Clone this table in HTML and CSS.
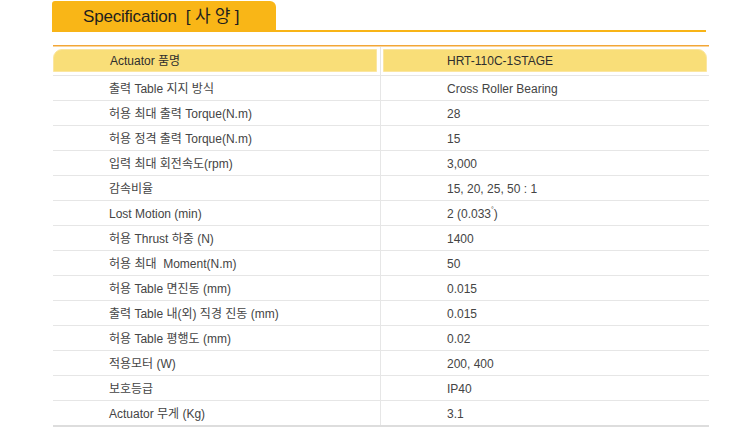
FILE: index.html
```html
<!DOCTYPE html>
<html lang="ko">
<head>
<meta charset="utf-8">
<title>Specification</title>
<link rel="stylesheet" href="styles.css">
</head>
<body>
<div class="top">
  <div class="tab">Specification&nbsp; [ 사 양 ]</div>
</div>
<div class="spec">
  <div class="row head">
    <div class="cell c1"><div class="hcell left">Actuator 품명</div></div>
    <div class="cell c2"><div class="hcell right">HRT-110C-1STAGE</div></div>
  </div>
  <div class="row"><div class="cell c1">출력 Table 지지 방식</div><div class="cell c2">Cross Roller Bearing</div></div>
  <div class="row"><div class="cell c1">허용 최대 출력 Torque(N.m)</div><div class="cell c2">28</div></div>
  <div class="row"><div class="cell c1">허용 정격 출력 Torque(N.m)</div><div class="cell c2">15</div></div>
  <div class="row"><div class="cell c1">입력 최대 회전속도(rpm)</div><div class="cell c2">3,000</div></div>
  <div class="row"><div class="cell c1">감속비율</div><div class="cell c2">15, 20, 25, 50 : 1</div></div>
  <div class="row"><div class="cell c1">Lost Motion (min)</div><div class="cell c2">2 (0.033<sup class="deg">°</sup>)</div></div>
  <div class="row"><div class="cell c1">허용 Thrust 하중 (N)</div><div class="cell c2">1400</div></div>
  <div class="row"><div class="cell c1">허용 최대&nbsp; Moment(N.m)</div><div class="cell c2">50</div></div>
  <div class="row"><div class="cell c1">허용 Table 면진동 (mm)</div><div class="cell c2">0.015</div></div>
  <div class="row"><div class="cell c1">출력 Table 내(외) 직경 진동 (mm)</div><div class="cell c2">0.015</div></div>
  <div class="row"><div class="cell c1">허용 Table 평행도 (mm)</div><div class="cell c2">0.02</div></div>
  <div class="row"><div class="cell c1">적용모터 (W)</div><div class="cell c2">200, 400</div></div>
  <div class="row"><div class="cell c1">보호등급</div><div class="cell c2">IP40</div></div>
  <div class="row last"><div class="cell c1">Actuator 무게 (Kg)</div><div class="cell c2">3.1</div></div>
</div>
</body>
</html>
```
FILE: styles.css
```css
html, body {
  margin: 0;
  padding: 0;
  background: #ffffff;
}
body {
  font-family: "Liberation Sans", "Noto Sans CJK KR", sans-serif;
  color: #444444;
}
.top {
  margin-left: 52px;
  width: 654px;
  padding-top: 1px;
  border-bottom: 2px solid #f8b417;
}
.tab {
  width: 193px;
  height: 29px;
  padding-left: 31px;
  background: #f9b617;
  border-radius: 3px 6px 0 0;
  font-size: 17px;
  line-height: 32px;
  color: #1e1e1e;
  letter-spacing: -0.2px;
}
.spec {
  margin-left: 53px;
  margin-top: 13px;
  width: 656px;
  border-top: 1px solid #f3a637;
  box-shadow: inset 0 1px 0 #f9d49a;
  padding-top: 1px;
}
.row {
  display: grid;
  grid-template-columns: 328px 328px;
  border-bottom: 1px solid #e6e6e6;
  height: 24px;
}
.cell {
  font-size: 12px;
  line-height: 22px;
  padding-top: 2px;
  white-space: nowrap;
}
.c1 {
  border-right: 1px solid #e6e6e6;
  padding-left: 56px;
}
.c2 {
  padding-left: 66px;
}
.row.head {
  height: 28px;
}
.head .cell {
  padding: 2px 0 3px 0;
}
.head .c1 {
  padding-right: 3px;
}
.head .c2 {
  padding: 2px 2px 3px 2px;
}
.hcell {
  height: 21px;
  line-height: 23px;
  background: #f9de78;
  border: 1px solid #fbe6a0;
  color: #2e2e2e;
}
.hcell.left {
  border-radius: 9px 0 0 0;
  padding-left: 56px;
}
.hcell.right {
  border-radius: 0 9px 0 0;
  padding-left: 63px;
}
.row.last {
  border-bottom: 2px solid #dddddd;
}
.deg {
  font-size: 7px;
  vertical-align: 6px;
  line-height: 0;
}
```
